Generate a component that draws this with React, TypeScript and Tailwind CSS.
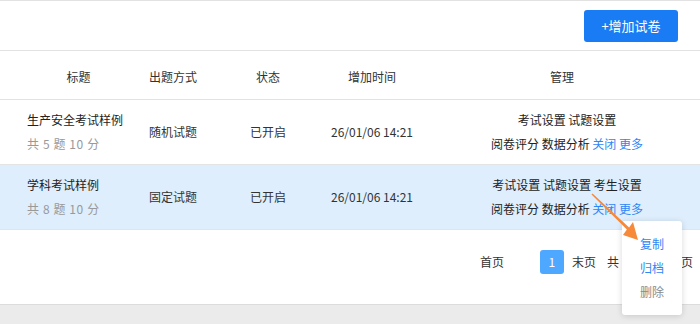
import React from "react";

type Paper = {
  title: string;
  count: number;
  score: number;
  mode: string;
  status: string;
  time: string;
  ops: string[];
  active?: boolean;
};

const papers: Paper[] = [
  {
    title: "生产安全考试样例",
    count: 5,
    score: 10,
    mode: "随机试题",
    status: "已开启",
    time: "26/01/06 14:21",
    ops: ["考试设置", "试题设置"],
  },
  {
    title: "学科考试样例",
    count: 8,
    score: 10,
    mode: "固定试题",
    status: "已开启",
    time: "26/01/06 14:21",
    ops: ["考试设置", "试题设置", "考生设置"],
    active: true,
  },
];

const font = "font-['Noto_Sans_CJK_SC','Noto_Sans',sans-serif]";

function Row({ p }: { p: Paper }) {
  return (
    <div
      className={`flex h-[65px] items-center border-b border-[#e4e4e4] text-[12px] text-[#333] ${
        p.active ? "bg-[#deeefc]" : "bg-white"
      }`}
    >
      <div className="flex w-[130px] flex-col pl-[27px] leading-[24px]">
        <span className="text-[#222]">{p.title}</span>
        <span className="tracking-[0.6px] text-[#999]">
          共 {p.count} 题 {p.score} 分
        </span>
      </div>
      <div className="w-[86px] text-center">{p.mode}</div>
      <div className="w-[104px] text-center">{p.status}</div>
      <div className="w-[104px] text-center">{p.time}</div>
      <div className="flex flex-1 flex-col items-center pl-[10px] leading-[24px]">
        <span className="text-[#222]">{p.ops.join(" ")}</span>
        <span className="text-[#222]">
          阅卷评分 数据分析 <span className="text-[#2f86f6]">关闭 更多</span>
        </span>
      </div>
    </div>
  );
}

export default function App() {
  return (
    <div className={`relative flex h-[324px] w-full flex-col bg-[#ebebeb] ${font}`}>
      {/* toolbar */}
      <div className="flex h-[51px] items-center justify-end border-t border-b border-[#e2e2e2] bg-white pr-[22px]">
        <button className="h-[32px] w-[94px] rounded-[3px] bg-[#1a7cf5] text-[13px] text-white">
          +增加试卷
        </button>
      </div>

      {/* table head */}
      <div className="flex h-[49px] items-center border-b border-[#e2e2e2] bg-white pt-[3px] text-[12px] text-[#333]">
        <div className="w-[130px] pl-[27px] text-center">标题</div>
        <div className="w-[86px] text-center">出题方式</div>
        <div className="w-[104px] text-center">状态</div>
        <div className="w-[104px] text-center">增加时间</div>
        <div className="flex-1 text-center">管理</div>
      </div>

      {papers.map((p) => (
        <Row key={p.title} p={p} />
      ))}

      {/* pagination */}
      <div className="flex h-[75px] items-start justify-end border-b border-[#dcdcdc] bg-white pr-[7px] pt-[20px] text-[12px] text-[#333]">
        <div className="flex h-[24px] items-center">
          <span>首页</span>
          <span className="ml-[36px] flex h-[24px] w-[24px] items-center justify-center rounded-[3px] bg-[#4fa8ff] text-white">
            1
          </span>
          <span className="ml-[8px]">末页</span>
          <span className="ml-[11px]">共</span>
          <span className="w-[62px]" />
          <span>页</span>
        </div>
      </div>

      {/* more menu */}
      <div className="absolute left-[622px] top-[221px] flex w-[60px] flex-col rounded-[3px] bg-white py-[11px] text-center text-[12px] leading-[24px] shadow-[0_1px_6px_rgba(0,0,0,0.15)]">
        <span className="text-[#2f86f6]">复制</span>
        <span className="text-[#2f86f6]">归档</span>
        <span className="text-[#8a8a8a]">删除</span>
      </div>

      {/* pointer arrow */}
      <svg
        className="absolute left-[580px] top-[190px]"
        width="70"
        height="60"
        viewBox="0 0 70 60"
      >
        <polygon
          points="12.5,3.5 49.1,37.4 53,32 58,50 43,45 46.9,39.6 11.5,4.5"
          fill="#f68a3a"
        />
      </svg>
    </div>
  );
}
